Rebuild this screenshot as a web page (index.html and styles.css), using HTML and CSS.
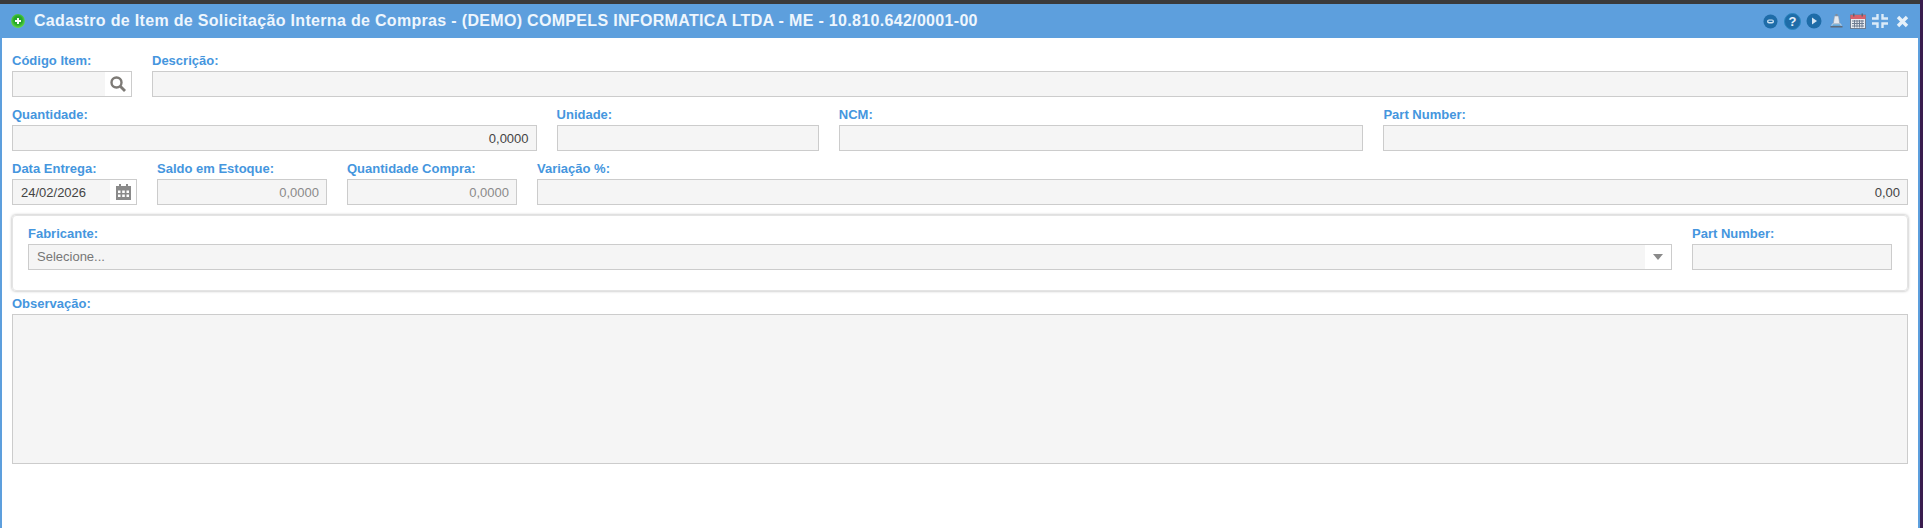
FILE: index.html
```html
<!DOCTYPE html>
<html lang="pt-BR">
<head>
<meta charset="UTF-8" />
<meta name="viewport" content="width=device-width, initial-scale=1" />
<title>Cadastro de Item de Solicitação Interna de Compras</title>
<link rel="stylesheet" href="styles.css">
</head>
<body>
  <div class="janela">
    <header class="titulo">
      <svg class="ico-titulo" width="14" height="14" viewBox="0 0 14 14">
        <defs>
          <radialGradient id="verde" cx="50%" cy="45%" r="55%">
            <stop offset="0" stop-color="#1f9f26"/>
            <stop offset="0.55" stop-color="#27a92b"/>
            <stop offset="1" stop-color="#66dc48"/>
          </radialGradient>
        </defs>
        <circle cx="7" cy="7" r="6.9" fill="url(#verde)"/>
        <path d="M7 4v6M4 7h6" stroke="#fff" stroke-width="2"/>
      </svg>
      <h1>Cadastro de Item de Solicitação Interna de Compras - (DEMO) COMPELS INFORMATICA LTDA - ME - 10.810.642/0001-00</h1>
      <div class="acoes">
        <svg width="15" height="15" viewBox="0 0 15 15">
          <circle cx="7.5" cy="7.5" r="7" fill="#1e6ca8"/>
          <rect x="4" y="5.5" width="7" height="4" rx="2" fill="#cfe3f3"/>
          <rect x="5.5" y="6.6" width="4" height="1.4" fill="#1e6ca8"/>
        </svg>
        <svg width="17" height="17" viewBox="0 0 17 17">
          <circle cx="8.5" cy="8.5" r="8" fill="#1e6ca8" stroke="#2a86c0"/>
          <text x="8.5" y="13.2" class="ico-ajuda">?</text>
        </svg>
        <svg width="16" height="16" viewBox="0 0 16 16">
          <circle cx="8" cy="8" r="7.5" fill="#1e6ca8"/>
          <path d="M6 4.5v7l5-3.5z" fill="#d5e6f4"/>
        </svg>
        <svg width="13" height="15" viewBox="0 0 13 15">
          <rect x="5.5" y="0" width="2" height="2" fill="#7f8b9a"/>
          <path d="M4.5 2h4l1.2 7.5H3.3z" fill="#e4e9ef" stroke="#8e99a8" stroke-width="0.6"/>
          <path d="M2.5 9.5h8l1.5 2H1z" fill="#d5dbe3"/>
          <rect x="2.5" y="10.5" width="8" height="1" fill="#2f8fd0"/>
          <rect x="0.5" y="12" width="12" height="1.5" fill="#5f6b7a"/>
        </svg>
        <svg width="16" height="16" viewBox="0 0 16 16">
          <rect x="0.5" y="2" width="15" height="13.5" fill="#e8ebf0" stroke="#6f7d92"/>
          <rect x="0.5" y="2" width="15" height="4" fill="#d9626b"/>
          <rect x="3" y="0.5" width="1.5" height="3" fill="#5b6474"/>
          <rect x="11.5" y="0.5" width="1.5" height="3" fill="#5b6474"/>
          <path d="M2 8h12M2 10.5h12M2 13h12M4.5 7v7.5M7 7v7.5M9.5 7v7.5M12 7v7.5" stroke="#6f7d92"/>
        </svg>
        <svg width="16" height="14" viewBox="0 0 16 14">
          <path d="M5.5 0v4.5H0M10.5 0v4.5H16M5.5 14V9.5H0M10.5 14V9.5H16" fill="none" stroke="#dcebf8" stroke-width="2.4"/>
        </svg>
        <svg width="13" height="13" viewBox="0 0 13 13">
          <path d="M2 2l9 9M11 2l-9 9" stroke="#e6f1fa" stroke-width="3.4"/>
        </svg>
      </div>
    </header>

    <form class="conteudo">
      <div class="linha linha-item">
        <div class="campo">
          <label>Código Item:</label>
          <div class="caixa com-botao">
            <input type="text" disabled>
            <span class="botao">
              <svg width="18" height="18" viewBox="0 0 18 18">
                <circle cx="7.5" cy="7.5" r="5" fill="none" stroke="#7d7a76" stroke-width="2.4"/>
                <path d="M11.5 11.5l4.5 4.5" stroke="#7d7a76" stroke-width="2.8"/>
              </svg>
            </span>
          </div>
        </div>
        <div class="campo">
          <label>Descrição:</label>
          <input class="caixa" type="text" disabled>
        </div>
      </div>

      <div class="linha linha-qtd">
        <div class="campo">
          <label>Quantidade:</label>
          <input class="caixa direita escuro" type="text" value="0,0000" disabled>
        </div>
        <div class="campo">
          <label>Unidade:</label>
          <input class="caixa" type="text" disabled>
        </div>
        <div class="campo">
          <label>NCM:</label>
          <input class="caixa" type="text" disabled>
        </div>
        <div class="campo">
          <label>Part Number:</label>
          <input class="caixa" type="text" disabled>
        </div>
      </div>

      <div class="linha linha-data">
        <div class="campo">
          <label>Data Entrega:</label>
          <div class="caixa com-botao">
            <input class="escuro" type="text" value="24/02/2026" disabled>
            <span class="botao">
              <svg width="15" height="16" viewBox="0 0 15 16">
                <path d="M3 0h2v2h5V0h2v2h3v14H0V2h3z" fill="#8a8a8a"/>
                <path d="M2 6.5h2.5V9H2zM6.2 6.5h2.6V9H6.2zM10.5 6.5H13V9h-2.5zM2 10.500h2.500V13H2zM6.200 10.500h2.600V13H6.200zM10.500 10.500H13V13h-2.500z" fill="#fff"/>
              </svg>
            </span>
          </div>
        </div>
        <div class="campo">
          <label>Saldo em Estoque:</label>
          <input class="caixa direita" type="text" value="0,0000" disabled>
        </div>
        <div class="campo">
          <label>Quantidade Compra:</label>
          <input class="caixa direita" type="text" value="0,0000" disabled>
        </div>
        <div class="campo">
          <label>Variação %:</label>
          <input class="caixa direita escuro" type="text" value="0,00" disabled>
        </div>
      </div>

      <fieldset class="painel">
        <div class="campo">
          <label>Fabricante:</label>
          <div class="caixa com-botao">
            <span class="selecione">Selecione...</span>
            <span class="botao seta"></span>
          </div>
        </div>
        <div class="campo">
          <label>Part Number:</label>
          <input class="caixa" type="text" disabled>
        </div>
      </fieldset>

      <div class="campo">
        <label>Observação:</label>
        <textarea class="caixa obs" disabled></textarea>
      </div>
    </form>
  </div>
</body>
</html>
```

FILE: styles.css
```css
* {
  box-sizing: border-box;
}
html, body {
  height: 100%;
}
body {
  margin: 0;
  padding-top: 4px;
  background: #3a3a3a;
  border-right: 3px solid #3a1c4e;
  font-family: "Liberation Sans", Arial, sans-serif;
  font-size: 13px;
  overflow: hidden;
}
.janela {
  height: 100%;
  background: #fff;
  border: solid #5d9fdd;
  border-width: 0 2px;
}
.titulo {
  display: flex;
  align-items: center;
  height: 34px;
  padding: 0 5px 0 9px;
  background: #5d9fdd;
}
.ico-titulo {
  margin-right: 9px;
  flex: none;
}
.titulo h1 {
  flex: 1;
  margin: 0;
  font-size: 16px;
  font-weight: 700;
  letter-spacing: 0.32px;
  color: #eef6fd;
}
.acoes {
  display: grid;
  grid-auto-flow: column;
  grid-auto-columns: 22px;
  align-items: center;
  justify-items: center;
}
.ico-ajuda {
  fill: #e4f0fa;
  font-size: 13px;
  font-weight: 700;
  text-anchor: middle;
}
.conteudo {
  padding: 13px 10px 0;
}
.linha {
  display: grid;
  gap: 20px;
  margin-bottom: 8px;
}
.linha-item {
  grid-template-columns: 120px 1fr;
}
.linha-qtd {
  grid-template-columns: 2fr 1fr 2fr 2fr;
}
.linha-data {
  grid-template-columns: 125px 170px 170px 1fr;
}
.campo {
  display: flex;
  flex-direction: column;
  min-width: 0;
}
label {
  display: block;
  height: 20px;
  line-height: 20px;
  font-weight: 700;
  color: #4596de;
}
.caixa {
  display: block;
  width: 100%;
  height: 26px;
  margin: 0;
  padding: 0 7px 0 8px;
  border: 1px solid #cccccc;
  border-radius: 0;
  background: #f5f5f5;
  font: 13px "Liberation Sans", Arial, sans-serif;
  color: #8a8a8a;
}
.direita {
  text-align: right;
  -webkit-text-fill-color: #8a8a8a;
  opacity: 1;
}
.escuro {
  color: #444;
  -webkit-text-fill-color: #444;
  opacity: 1;
}
.com-botao {
  display: flex;
  align-items: stretch;
  padding: 0;
}
.com-botao input {
  flex: 1;
  min-width: 0;
  border: 0;
  padding: 0 8px;
  background: #f5f5f5;
  font: inherit;
}
.botao {
  display: flex;
  align-items: center;
  justify-content: center;
  flex: none;
  width: 26px;
  background: #fff;
}
.selecione {
  flex: 1;
  padding-left: 8px;
  line-height: 24px;
  color: #777;
}
.seta::before {
  content: "";
  border: solid transparent;
  border-width: 6px 5.5px 0;
  border-top-color: #8a8a8a;
}
.painel {
  display: grid;
  grid-template-columns: 1fr 200px;
  gap: 20px;
  height: 76px;
  margin: 10px 0 3px;
  padding: 8px 15px 0;
  border: 1px solid #e4e4e4;
  border-radius: 4px;
  box-shadow: 0 0 3px rgba(0, 0, 0, 0.35);
}
.obs {
  height: 150px;
  resize: none;
}
```
